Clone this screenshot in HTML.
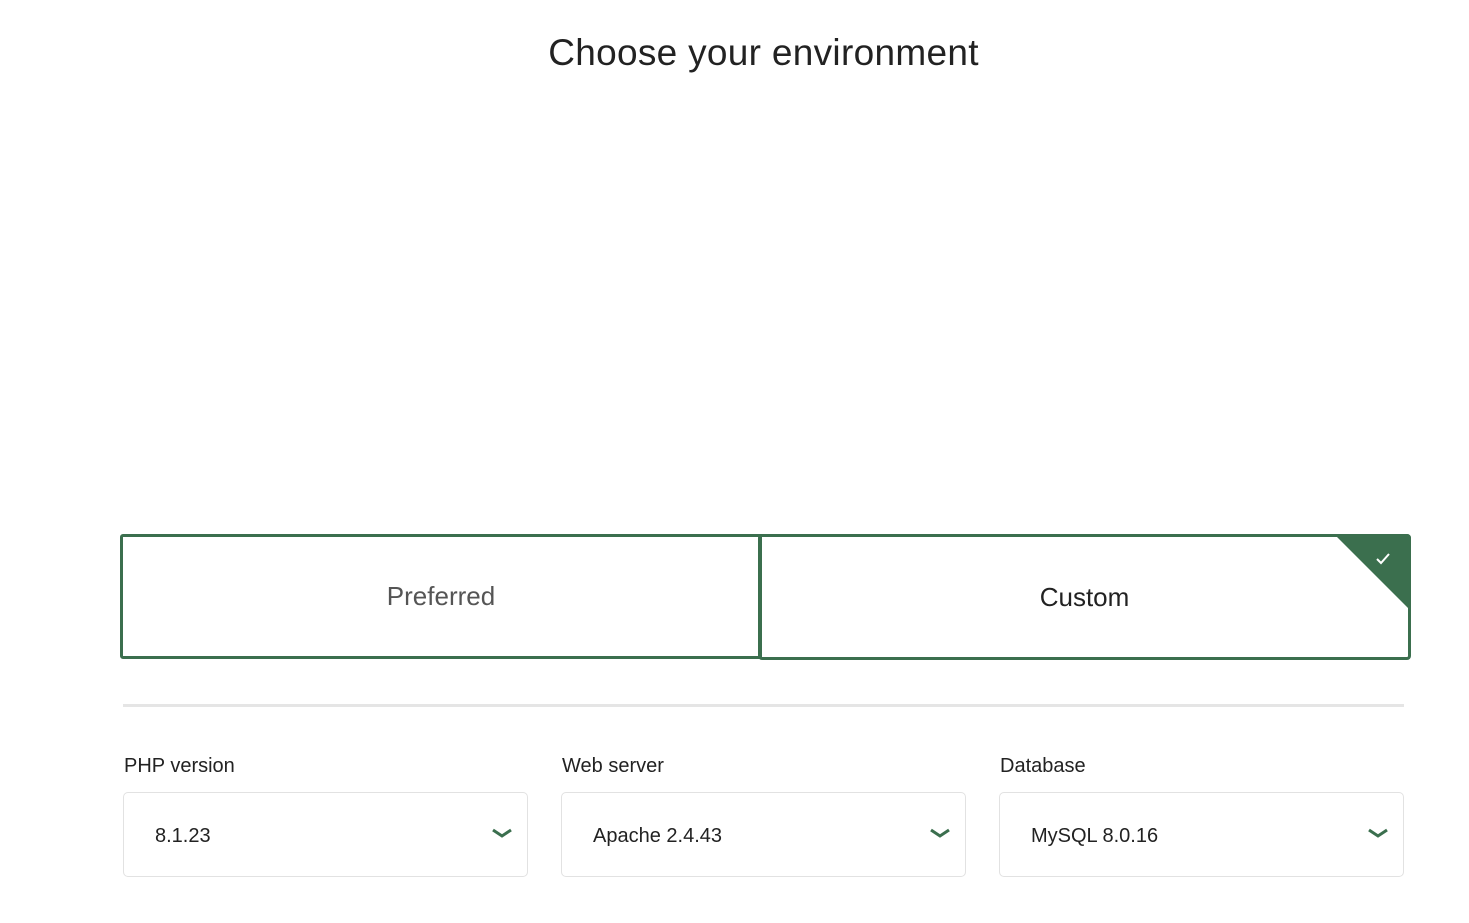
<!DOCTYPE html>
<html><head><style>
body{margin:0;width:1469px;height:923px;background:#fff;font-family:"Liberation Sans",sans-serif;position:relative;overflow:hidden;color:#222}
h1{position:absolute;top:32px;left:0;width:1527px;margin:0;text-align:center;font-weight:normal;font-size:37px;color:#222;letter-spacing:0.3px}
.box{position:absolute;box-sizing:border-box;border:3px solid #3b6f4e;display:flex;align-items:center;justify-content:center;font-size:26px}
.tri{position:absolute;right:-3px;top:-3px;width:0;height:0;border-top:77px solid #3b6f4e;border-left:77px solid transparent;border-top-right-radius:4px}
.div{position:absolute;left:123px;top:704px;width:1281px;height:3px;background:#e5e5e5}
.lbl{position:absolute;top:755px;font-size:20px;color:#222}
.sel{position:absolute;top:792px;width:405px;height:85px;box-sizing:border-box;border:1px solid #e2e2e2;border-radius:5px;font-size:20px;padding-left:31px;line-height:87px}
.sel svg{position:absolute;right:14px;top:35px}
</style></head><body>
<h1>Choose your environment</h1>
<div class="box" style="left:120px;top:534px;width:642px;height:125px;border-radius:3px 0 0 3px;color:#555">Preferred</div>
<div class="box" style="left:758px;top:534px;width:653px;height:126px;border-radius:4px;color:#222">Custom<div class="tri"></div>
<svg style="position:absolute;right:17px;top:15px" width="16" height="13" viewBox="0 0 16 13"><path d="M2 7l4 4 8-9" stroke="#fff" stroke-width="2" fill="none"/></svg></div>
<div class="div"></div>
<div class="lbl" style="left:124px">PHP version</div>
<div class="lbl" style="left:562px">Web server</div>
<div class="lbl" style="left:1000px">Database</div>
<div class="sel" style="left:123px">8.1.23<svg width="22" height="10" viewBox="0 0 22 10"><path d="M2 2l9 6 9-6" stroke="#3b6f4e" stroke-width="3" fill="none"/></svg></div>
<div class="sel" style="left:561px">Apache 2.4.43<svg width="22" height="10" viewBox="0 0 22 10"><path d="M2 2l9 6 9-6" stroke="#3b6f4e" stroke-width="3" fill="none"/></svg></div>
<div class="sel" style="left:999px">MySQL 8.0.16<svg width="22" height="10" viewBox="0 0 22 10"><path d="M2 2l9 6 9-6" stroke="#3b6f4e" stroke-width="3" fill="none"/></svg></div>
</body></html>
